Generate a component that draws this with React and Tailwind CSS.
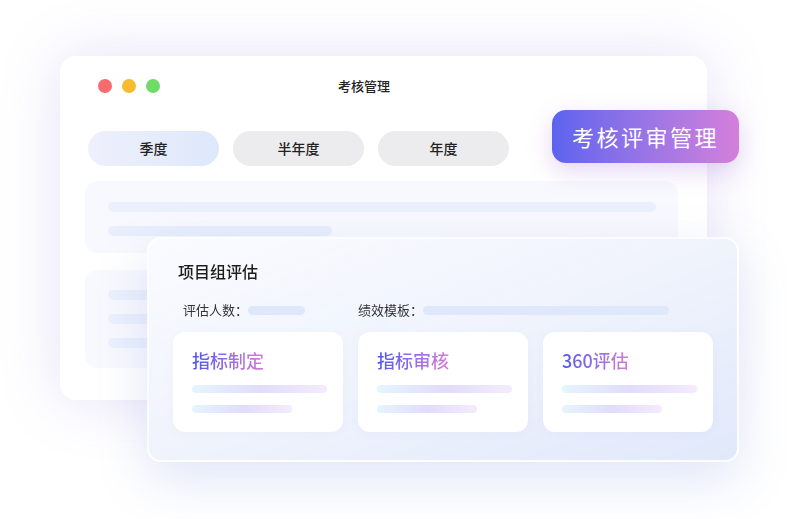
import React from "react";

const font = { fontFamily: '"Noto Sans CJK SC", "Noto Sans", sans-serif' };

function InnerCard({ title }) {
  return (
    <div className="flex h-[100px] w-[170px] flex-col rounded-[12px] bg-white pl-[19px] pt-[16px] shadow-[0_2px_8px_rgba(140,150,230,0.06)]">
      <div className="w-fit bg-linear-to-r from-[#4f55ef] to-[#d67bd6] bg-clip-text text-[18px] leading-[24px] font-medium text-transparent">
        {title}
      </div>
      <div className="mt-[13px] h-[8px] w-[135px] rounded-full bg-linear-to-r from-[#e5f5fd] via-[#e1dcfb] to-[#f5ebfd]" />
      <div className="mt-[12px] h-[8px] w-[100px] rounded-full bg-linear-to-r from-[#e5f5fd] via-[#e1dcfb] to-[#f5ebfd]" />
    </div>
  );
}

export default function App() {
  return (
    <div style={font} className="relative h-[519px] w-[800px] overflow-hidden bg-white">
      {/* back window */}
      <div className="ml-[60px] mt-[56px] h-[344px] w-[647px] rounded-[16px] bg-white shadow-[0_0_60px_rgba(150,130,220,0.24)]">
        <div className="flex items-center pl-[38px] pt-[20px]">
          <div className="flex gap-[10px]">
            <span className="h-[14px] w-[14px] rounded-full bg-[#f76b6e]" />
            <span className="h-[14px] w-[14px] rounded-full bg-[#f6bb2f]" />
            <span className="h-[14px] w-[14px] rounded-full bg-[#6fdc6a]" />
          </div>
          <div className="ml-[178px] text-[13px] font-medium text-[#222]">考核管理</div>
        </div>
        <div className="mt-[35px] flex gap-[14px] pl-[28px]">
          <div className="flex h-[35px] w-[131px] items-center justify-center rounded-full bg-linear-to-r from-[#eef0fb] to-[#dde8fb] text-[14px] font-medium text-[#222]">
            季度
          </div>
          <div className="flex h-[35px] w-[131px] items-center justify-center rounded-full bg-[#ececef] text-[14px] font-medium text-[#222]">
            半年度
          </div>
          <div className="flex h-[35px] w-[131px] items-center justify-center rounded-full bg-[#ececef] text-[14px] font-medium text-[#222]">
            年度
          </div>
        </div>
        <div className="ml-[25px] mt-[15px] flex h-[72px] w-[593px] flex-col gap-[14px] rounded-[12px] bg-[#f8f9fe] pl-[23px] pt-[21px]">
          <div className="h-[10px] w-[548px] rounded-full bg-[#ebf0fc]" />
          <div className="h-[10px] w-[224px] rounded-full bg-[#e8eefb]" />
        </div>
        <div className="ml-[25px] mt-[17px] flex h-[98px] w-[593px] flex-col gap-[14px] rounded-[12px] bg-[#f8f9fe] pl-[23px] pt-[20px]">
          <div className="h-[10px] w-[300px] rounded-full bg-[#ebf0fc]" />
          <div className="h-[10px] w-[300px] rounded-full bg-[#ebf0fc]" />
          <div className="h-[10px] w-[300px] rounded-full bg-[#ebf0fc]" />
        </div>
      </div>

      {/* badge */}
      <div className="absolute left-[552px] top-[110px] flex h-[53px] w-[187px] items-center justify-center rounded-[14px] bg-linear-to-r from-[#5d63ef] to-[#d47fda] text-[22px] tracking-[2.5px] text-white shadow-[0_8px_24px_rgba(170,120,220,0.3)]">
        考核评审管理
      </div>

      {/* front card */}
      <div className="absolute left-[147px] top-[237px] h-[225px] w-[592px] rounded-[14px] border-2 border-white/85 bg-linear-to-br from-[#fafbff]/95 via-[#eef2fc]/90 to-[#dfe7fa]/95 shadow-[0_18px_50px_rgba(120,140,225,0.22)] backdrop-blur-md">
        <div className="pl-[29px] pt-[21px] text-[16px] leading-[22px] font-medium text-[#1c1c1c]">项目组评估</div>
        <div className="mt-[19px] flex items-center pl-[34px] text-[13px] leading-[18px] text-[#333]">
          <span>评估人数：</span>
          <span className="h-[9px] w-[57px] rounded-full bg-[#dfe8fa]" />
          <span className="ml-[53px]">绩效模板：</span>
          <span className="h-[9px] w-[246px] rounded-full bg-[#dfe8fa]" />
        </div>
        <div className="mt-[13px] flex gap-[15px] pl-[24px]">
          <InnerCard title="指标制定" />
          <InnerCard title="指标审核" />
          <InnerCard title="360评估" />
        </div>
      </div>
    </div>
  );
}
